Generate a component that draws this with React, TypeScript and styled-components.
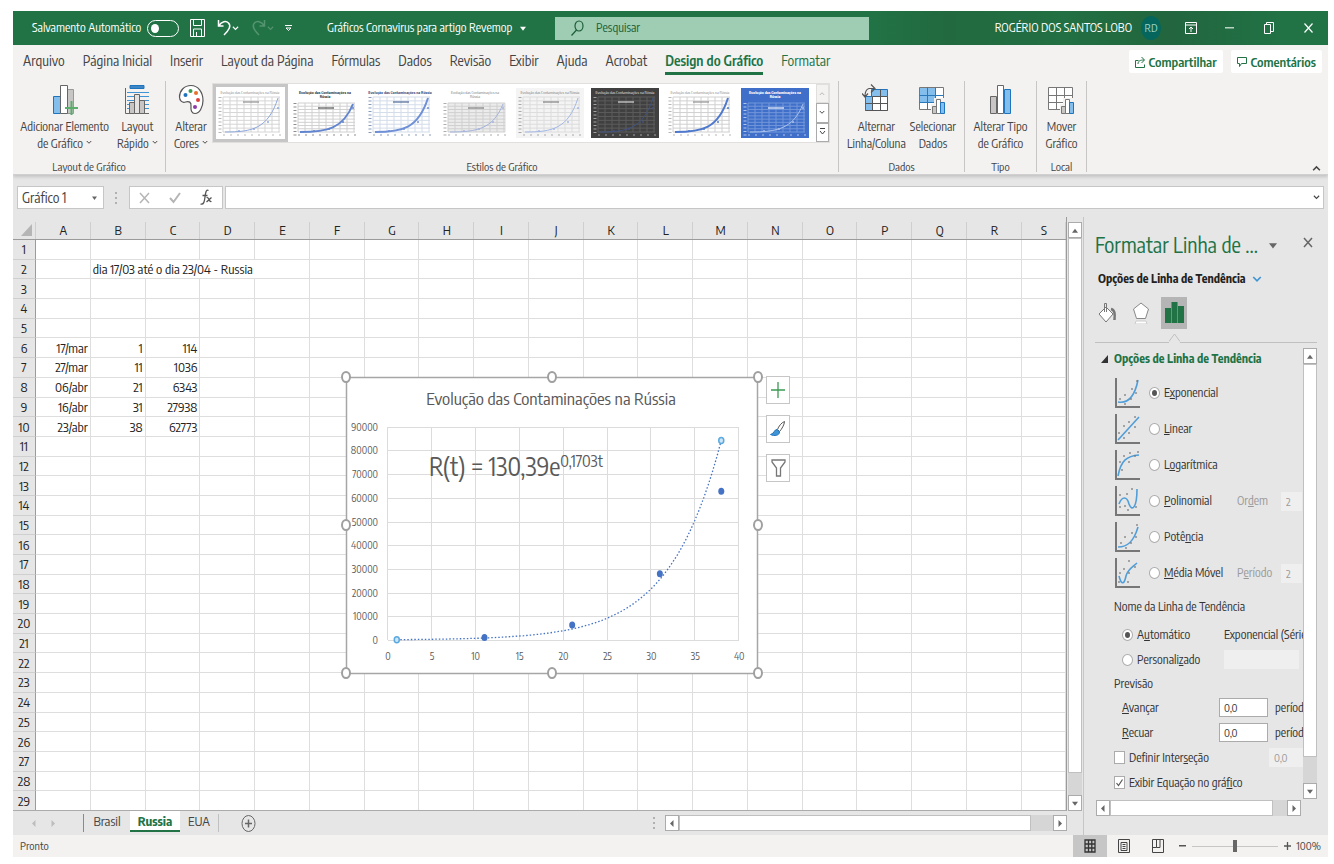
import React from 'react';
import styled, { createGlobalStyle } from 'styled-components';

const GREEN = '#217346';
const PANEL = '#e6e6e6';

const GlobalStyle = createGlobalStyle`
  * { box-sizing: border-box; }
  body {
    margin: 0;
    background: #fff;
    color: #444;
    font: 13px/16px "Encode Sans Condensed", "Roboto Condensed", Lato, sans-serif;
  }
  button, input, select { font: inherit; color: inherit; margin: 0; }
  button { border: 0; padding: 0; background: none; white-space: nowrap; }
  svg { display: block; flex: none; }
`;

const Window = styled.div`
  margin: 11px 6px 7px 13px;
  display: flex;
  flex-direction: column;
`;

/* ---------- title bar ---------- */
const TitleBar = styled.header`
  height: 34px;
  background: linear-gradient(90deg, ${GREEN} 65%, #22693f 71%, #227043 80%, #22653e 88%, #217346 97%);
  color: #fff;
  font-size: 12px;
  display: flex;
  align-items: center;
`;
const QuickAccess = styled.div`
  width: 314px;
  padding-left: 19px;
  display: flex;
  align-items: center;
  gap: 9px;
  white-space: nowrap;
`;
const AutoSave = styled.label`
  display: flex;
  align-items: center;
  width: 147px;
  justify-content: space-between;
`;
const Toggle = styled.input`
  appearance: none;
  width: 32px;
  height: 17px;
  border: 1px solid #fff;
  border-radius: 9px;
  display: flex;
  align-items: center;
  padding-left: 3px;
  &::before { content: ''; width: 8px; height: 9px; border-radius: 50%; background: #fff; }
`;
const IconButton = styled.button<{ $w?: number }>`
  display: flex;
  align-items: center;
  justify-content: center;
  width: ${p => (p.$w ? `${p.$w}px` : 'auto')};
`;
const FileName = styled.button`
  display: flex;
  align-items: center;
  gap: 8px;
  width: 228px;
`;
const SearchBox = styled.label`
  display: flex;
  align-items: center;
  gap: 12px;
  width: 314px;
  height: 23px;
  padding-left: 16px;
  background: #9fcdb3;
  color: #1b5e39;
  input { border: 0; background: none; width: 200px; padding: 0; outline: 0; }
  input::placeholder { color: #1b5e39; opacity: 1; }
`;
const Account = styled.div`
  margin-left: auto;
  display: flex;
  align-items: center;
  gap: 9px;
`;
const Avatar = styled.span`
  width: 20px;
  height: 24px;
  border-radius: 50%;
  background: #04665c;
  color: #9fd8c8;
  font-size: 11px;
  line-height: 24px;
  text-align: center;
`;
const WindowControls = styled.div`
  display: flex;
  margin-left: 10px;
`;

/* ---------- ribbon ---------- */
const Ribbon = styled.div`
  height: 130px;
  background: #f3f2f1;
  border-bottom: 1px solid #d0d0d0;
  box-shadow: 0 2px 3px #c4c4c4;
  clip-path: inset(0 0 -6px 0);
  position: relative;
`;
const TabRow = styled.nav`
  height: 33px;
  padding: 0 6px 0 10px;
  display: flex;
  align-items: center;
  gap: 18px;
  font-size: 14px;
`;
const Tab = styled.button<{ $tone?: 'active' | 'context' }>`
  height: 26px;
  padding-top: 2px;
  color: ${p => (p.$tone ? GREEN : '#444')};
  font-weight: ${p => (p.$tone === 'active' ? 600 : 400)};
  border-bottom: 3px solid ${p => (p.$tone === 'active' ? GREEN : 'transparent')};
`;
const TabActions = styled.div`
  margin-left: auto;
  display: flex;
  gap: 8px;
`;
const ActionButton = styled.button`
  height: 23px;
  padding: 0 6px;
  display: flex;
  align-items: center;
  gap: 4px;
  background: #fff;
  border-radius: 2px;
  color: ${GREEN};
  font-size: 13px;
  font-weight: 600;
`;
const Groups = styled.div`
  display: flex;
  padding-top: 3px;
`;
const Group = styled.section<{ $w: number }>`
  width: ${p => p.$w}px;
  height: 91px;
  border-right: 1px solid #c8c6c4;
  display: flex;
  flex-direction: column;
  justify-content: space-between;
`;
const GroupBody = styled.div<{ $gap?: number }>`
  display: flex;
  justify-content: center;
  gap: ${p => p.$gap ?? 8}px;
`;
const GroupName = styled.span`
  font-size: 11px;
  line-height: 13px;
  text-align: center;
  height: 12px;
`;
const Command = styled.button`
  display: flex;
  flex-direction: column;
  align-items: center;
  padding-top: 3px;
  font-size: 12px;
  svg { margin-bottom: 3px; }
`;
const Caption = styled.span`
  display: flex;
  align-items: center;
  gap: 3px;
  height: 17px;
`;
const Gallery = styled.div`
  display: flex;
  height: 60px;
  margin-top: 2px;
  background: #fff;
  border: 1px solid #e1dfdd;
`;
const Thumb = styled.button<{ $on?: boolean }>`
  width: 75px;
  height: 58px;
  display: flex;
  align-items: center;
  justify-content: center;
  border: 3px solid ${p => (p.$on ? '#c6c6c6' : 'transparent')};
`;
const GalleryNav = styled.div`
  display: flex;
  flex-direction: column;
  width: 13px;
  margin-left: 3px;
`;
const NavStep = styled.button`
  flex: 1;
  border: 1px solid #ababab;
  display: flex;
  align-items: center;
  justify-content: center;
  &:disabled { border-color: #e1dfdd; background: #f3f2f1; }
`;
const Collapse = styled.button`
  position: absolute;
  right: 7px;
  bottom: 3px;
`;

/* ---------- formula bar ---------- */
const FormulaBar = styled.div`
  height: 42px;
  padding: 11px 4px 8px;
  background: ${PANEL};
  display: flex;
  align-items: stretch;
`;
const NameBox = styled.div`
  width: 87px;
  background: #fff;
  border: 1px solid #c6c6c6;
  display: flex;
  align-items: center;
  padding: 0 5px 0 4px;
  input { width: 70px; border: 0; padding: 0; background: none; outline: 0; font-size: 14px; }
`;
const Grip = styled.span`
  width: 25px;
  display: flex;
  align-items: center;
  justify-content: center;
`;
const FormulaTools = styled.div`
  width: 94px;
  margin-right: 2px;
  background: #fff;
  border: 1px solid #c6c6c6;
  display: flex;
  align-items: center;
  justify-content: space-around;
`;
const FormulaField = styled.div`
  flex: 1;
  display: flex;
  align-items: center;
  padding-right: 3px;
  background: #fff;
  border: 1px solid #c6c6c6;
  input { flex: 1; border: 0; background: none; outline: 0; }
`;

/* ---------- work area ---------- */
const Main = styled.main`
  display: flex;
  background: ${PANEL};
  height: 618px;
`;
const Workbook = styled.div`
  flex: 1;
  min-width: 0;
  display: flex;
  flex-direction: column;
`;
const SheetRow = styled.div`
  display: flex;
  height: 594px;
`;
const Sheet = styled.div`
  flex: 1;
  min-width: 0;
  position: relative;
  overflow: hidden;
  border-right: 1px solid #9b9b9b;
  border-bottom: 1px solid #ababab;
`;
const Grid = styled.table`
  width: 100%;
  height: 594px;
  table-layout: fixed;
  border-collapse: separate;
  border-spacing: 0;
  color: #222;
  th, td { padding: 0; font-weight: 400; overflow: hidden; white-space: nowrap; line-height: 14px; }
`;
const ColHead = styled.th`
  height: 23px;
  padding-top: 4px !important;
  background: linear-gradient(#e6e6e6 5px, #cfcfcf 5px) right / 1px 100% no-repeat ${PANEL};
  border-bottom: 1px solid #9b9b9b;
  font-size: 13px;
`;
const RowHead = styled.th`
  background: ${PANEL};
  border-right: 1px solid #9b9b9b;
  border-bottom: 1px solid #cfcfcf;
  font-size: 13px;
`;
const Cell = styled.td<{ $align?: 'left' | 'right' }>`
  background: #fff;
  border-right: 1px solid #dedede;
  border-bottom: 1px solid #dedede;
  padding: ${p => (p.$align === 'left' ? '0 0 0 2px' : '0 2px 0 0')} !important;
  text-align: ${p => p.$align || 'right'};
  font-size: 13px;
`;
const ChartObject = styled.figure`
  position: absolute;
  left: 327px;
  top: 154px;
  margin: 0;
  text { fill: #595959; }
`;
const ChartTools = styled.div`
  position: absolute;
  left: 753px;
  top: 159px;
  display: flex;
  flex-direction: column;
  gap: 11px;
`;
const ChartTool = styled.button`
  width: 24px;
  height: 28px;
  background: #fff;
  border: 1px solid #c6c6c6;
  display: flex;
  align-items: center;
  justify-content: center;
`;

/* ---------- scroll bars ---------- */
const ScrollBar = styled.div<{ $dir: 'row' | 'column' }>`
  display: flex;
  flex-direction: ${p => p.$dir};
  background: #d6d6d6;
  ${p => (p.$dir === 'column' ? 'width: 14px;' : 'height: 16px;')}
`;
const ScrollStep = styled.button`
  width: 14px;
  height: 16px;
  background: #fff;
  border: 1px solid #ababab;
  display: flex;
  align-items: center;
  justify-content: center;
  flex: none;
`;
const ScrollThumb = styled.div`
  flex: 1;
  background: #fff;
  border: 1px solid #c0c0c0;
`;
const ScrollGap = styled.div<{ $size: number }>`
  flex: 0 0 ${p => p.$size}px;
`;
const SheetScroll = styled(ScrollBar)`
  margin: 5px 1px 0 1px;
`;
const BookFooter = styled.div`
  height: 24px;
  display: flex;
  align-items: center;
  padding-right: 16px;
`;
const SheetNav = styled.div`
  width: 71px;
  height: 18px;
  padding-left: 18px;
  display: flex;
  align-items: center;
  gap: 13px;
  border-right: 1px solid #8a8a8a;
`;
const SheetTab = styled.button<{ $on?: boolean; $w: number }>`
  width: ${p => p.$w}px;
  height: 21px;
  align-self: flex-start;
  background: ${p => (p.$on ? '#fff' : 'none')};
  color: ${p => (p.$on ? GREEN : '#444')};
  font-weight: ${p => (p.$on ? 700 : 400)};
  border-bottom: 2px solid ${p => (p.$on ? GREEN : 'transparent')};
`;
const AddSheet = styled.button`
  height: 18px;
  padding-left: 22px;
  border-left: 1px solid #c0c0c0;
`;
const FooterScroll = styled.div`
  margin-left: auto;
  width: 414px;
  display: flex;
  gap: 9px;
  align-items: center;
  ${ScrollBar} { flex: 1; }
`;

/* ---------- format pane ---------- */
const Pane = styled.aside`
  width: 245px;
  border-left: 1px solid #c6c6c6;
  padding: 14px 11px 0 11px;
  font-size: 12px;
  color: #333;
`;
const PaneHeader = styled.div`
  display: flex;
  align-items: center;
  height: 28px;
  h2 { margin: 0; font-size: 21px; line-height: 28px; font-weight: 400; color: ${GREEN}; width: 174px; white-space: nowrap; }
`;
const PaneClose = styled.button`
  margin-left: auto;
  padding: 0 4px 6px 0;
`;
const PaneSubject = styled.button`
  display: flex;
  align-items: center;
  gap: 6px;
  height: 38px;
  padding: 2px 0 0 3px;
  font-weight: 700;
  color: #222;
`;
const PaneIcons = styled.div`
  height: 45px;
  display: flex;
  align-items: flex-start;
  gap: 7px;
`;
const PaneIcon = styled.button<{ $on?: boolean }>`
  width: 26px;
  height: 32px;
  display: flex;
  align-items: center;
  justify-content: center;
  background: ${p => (p.$on ? '#b5b5b5' : 'none')};
`;
const Divider = styled.div`
  margin-top: -9px;
  height: 15px;
  display: flex;
  align-items: flex-start;
  &::before { content: ''; width: 74px; height: 9px; border-bottom: 1px solid #c0c0c0; }
  &::after { content: ''; flex: 1; height: 9px; border-bottom: 1px solid #c0c0c0; }
`;
const PaneBody = styled.div`
  display: flex;
  height: 451px;
`;
const Options = styled.form`
  flex: 1;
  min-width: 0;
  overflow: hidden;
  white-space: nowrap;
`;
const SectionToggle = styled.button`
  display: flex;
  align-items: center;
  gap: 6px;
  height: 27px;
  padding: 0 0 6px 6px;
  font-weight: 700;
  color: ${GREEN};
`;
const TrendRow = styled.div`
  height: 36px;
  padding-left: 20px;
  display: flex;
  align-items: center;
  gap: 9px;
`;
const TrendChoice = styled.label`
  display: flex;
  align-items: center;
  gap: 4px;
  width: 79px;
`;
const TrendParam = styled.label`
  display: flex;
  align-items: center;
  justify-content: space-between;
  width: 65px;
  flex: none;
  color: #9a9a9a;
`;
const Radio = styled.input`
  appearance: none;
  flex: none;
  width: 11px;
  height: 12px;
  border: 1px solid #ababab;
  border-radius: 50%;
  background: #fff;
  display: flex;
  align-items: center;
  justify-content: center;
  &:checked::before { content: ''; width: 5px; height: 6px; border-radius: 50%; background: #555; }
`;
const Check = styled.input`
  appearance: none;
  flex: none;
  width: 11px;
  height: 13px;
  border: 1px solid #ababab;
  background: #fff;
  &:checked {
    background: #fff url("data:image/svg+xml,%3Csvg xmlns='http://www.w3.org/2000/svg' viewBox='0 0 9 11'%3E%3Cpath d='M1.5 6l2 2.5L7.5 2.500' fill='none' stroke='%23555' stroke-width='1.200'/%3E%3C/svg%3E") center no-repeat;
  }
`;
const Label = styled.p<{ $h: number }>`
  margin: 0;
  padding-left: 19px;
  height: ${p => p.$h}px;
  line-height: ${p => p.$h}px;
`;
const FieldRow = styled.div<{ $indent: number }>`
  height: 25px;
  padding-left: ${p => p.$indent}px;
  display: flex;
  align-items: center;
  gap: 7px;
`;
const FieldName = styled.label<{ $w: number }>`
  display: flex;
  align-items: center;
  gap: 4px;
  width: ${p => p.$w}px;
  flex: none;
`;
const TextBox = styled.input<{ $w: number }>`
  flex: none;
  width: ${p => p.$w}px;
  height: 19px;
  padding: 0 4px;
  border: 1px solid #ababab;
  background: #fff;
  font-size: 11px;
  &:disabled { border-color: #efefef; background: #efefef; color: #9a9a9a; }
`;
const PaneScrollRow = styled.div`
  padding: 1px 16px 0 1px;
`;

/* ---------- status bar ---------- */
const StatusBar = styled.footer`
  height: 22px;
  background: #f3f2f1;
  display: flex;
  align-items: center;
  padding: 0 7px;
  font-size: 11px;
`;
const Views = styled.div`
  margin-left: auto;
  display: flex;
`;
const View = styled.button<{ $on?: boolean }>`
  width: 34px;
  height: 22px;
  display: flex;
  align-items: center;
  justify-content: center;
  background: ${p => (p.$on ? '#c6c6c6' : 'none')};
`;
const Zoom = styled.div`
  display: flex;
  align-items: center;
  gap: 6px;
  margin-left: 4px;
`;
const ZoomSlider = styled.input`
  appearance: none;
  width: 86px;
  height: 12px;
  background: linear-gradient(#c6c6c6, #c6c6c6) center / 100% 1px no-repeat;
  &::-webkit-slider-thumb { appearance: none; width: 4px; height: 12px; background: #666; }
`;

/* ---------- drawings ---------- */
const Chevron = ({ w = 7, color = '#444', up = false }: { w?: number; color?: string; up?: boolean }) => (
  <svg width={w} height={Math.max(5, w - 3)} viewBox="0 0 8 5" fill="none" stroke={color} strokeWidth="1.300">
    <path d={up ? 'M1 4.500l3-3 3 3' : 'M1 .5l3 3 3-3'} />
  </svg>
);
const Triangle = ({ d = 'down', color = '#666', s = 6 }: { d?: string; color?: string; s?: number }) => {
  const paths: Record<string, string> = {
    down: 'M0 1.500h6L3 5z', up: 'M0 5h6L3 1.500z', left: 'M4.500 0v6L1 3z', right: 'M1.500 0v6L5 3z',
  };
  return <svg width={s} height={s + 1} viewBox="0 0 6 6" preserveAspectRatio="none" fill={color}><path d={paths[d]} /></svg>;
};
const Dots = () => (
  <svg width="3" height="12" fill="#b0b0b0"><path d="M0 0h2v2H0zM0 5h2v2H0zM0 10h2v2H0z" /></svg>
);

const barsIcon = (
  <svg width="22" height="31" fill="#c8c6c4" stroke="#666">
    <path d="M.5 12.500h6v17h-6z" /><path fill="#fff" d="M7.500 1.500h6v28h-6z" /><path fill="#83beec" stroke="#1e74bd" d="M14.500 5.500h6v24h-6z" />
  </svg>
);
const addElementIcon = (
  <svg width="26" height="31" stroke="#666">
    <path fill="#83beec" stroke="#1e74bd" d="M1.500 12.500h7v17h-7z" /><path fill="#c8c6c4" stroke="#999" d="M15.500 5.500h6v24h-6z" />
    <path fill="#fff" d="M8.500 1.500h7v28h-7z" /><path d="M19.500 17v14M13 24h13" stroke="#5aae6c" strokeWidth="2" />
  </svg>
);
const quickLayoutIcon = (
  <svg width="26" height="31" fill="none" stroke="#666">
    <path fill="#3f86c6" stroke="#1e74bd" d="M6 1.500h14v3H6z" /><path d="M3 8.500h22M3 12.500h22M3 16.500h22M3 20.500h22M3 24.500h22" stroke="#3f94d6" />
    <path d="M1.500 4v25.500H25" /><path fill="#c8c6c4" d="M5.500 18.500h5v11h-5zM15.500 16.500h5v13h-5z" /><path fill="#e4e2e0" d="M10.500 10.500h5v19h-5z" />
  </svg>
);
const paletteIcon = (
  <svg width="26" height="31" viewBox="0 0 26 31" stroke="none">
    <path d="M13 1.500C6 1.500 1.500 7 1.500 13c0 4 3 6 6 5 3.500-1 6 0 5.500 4-.4 4 .5 7.500 4 7.500 4.500 0 8-6.500 8-13C25 8 20 1.500 13 1.500z" fill="#fff" stroke="#555" strokeWidth="1.200" />
    <circle cx="7.500" cy="11" r="2" fill="#1e74bd" /><circle cx="12.500" cy="7" r="2" fill="#3a9b52" /><circle cx="18" cy="9" r="2" fill="#e8702a" />
    <circle cx="20" cy="16" r="2" fill="#e03c3c" /><circle cx="17" cy="23" r="2" fill="#8e3ba6" />
  </svg>
);
const switchIcon = (
  <svg width="28" height="31" fill="none" stroke="#555">
    <path fill="#83beec" stroke="#1e74bd" d="M9.500 5.500h16v7h-16zM3.500 12.500h7v14h-7z" /><path fill="#fff" d="M10.500 12.500h15v14h-15z" />
    <path d="M3.500 19.500h22M3.500 26.500h22M18.500 5.500v21M10.500 12.500v14" />
    <path strokeWidth="1.200" d="M12 4.500H7q-4 1-4 8M9 .5l4 4-4 4M0 9.500l3 3.500 3-3.500" />
  </svg>
);
const tableBars = (blue: boolean) => (
  <svg width="27" height="31" fill="none" stroke="#777">
    <path fill="#fff" d="M.5 3.500h24v22H.5z" />{blue && <path fill="#83beec" stroke="none" d="M1 4h16v14H1z" />}
    <path d="M.5 11.500h24M.5 18.500h18M8.500 3.500v22M16.500 3.500v15" stroke={blue ? '#2b79b9' : '#777'} />
    <path fill="#f3f2f1" stroke="none" d="M12 20h3v-6h12v17H12z" />
    <path fill="#c8c6c4" d="M13.500 22.500h4v7h-4z" /><path fill="#fff" d="M17.500 15.500h4v14h-4z" /><path fill="#83beec" stroke="#1e74bd" d="M21.500 18.500h4v11h-4z" />
  </svg>
);

type ThumbStyle = { bg: string; fg: string; line: string; grid: string; plot?: string; bold?: boolean; two?: boolean; w: number };
const thumbs: ThumbStyle[] = [
  { bg: '#fff', fg: '#888', line: '#8fa8dc', grid: '#d5d5d5', w: 1 },
  { bg: '#fff', fg: '#444', line: '#6285cf', grid: '#d0d0d0', bold: true, two: true, w: 2 },
  { bg: '#fff', fg: '#3b5a8c', line: '#6f90d6', grid: '#d3dcea', bold: true, w: 2 },
  { bg: '#fff', fg: '#777', line: '#a4b4dd', grid: '#cfcfcf', plot: '#ececec', two: true, w: 1 },
  { bg: '#f4f4f4', fg: '#777', line: '#a4b9e6', grid: '#dcdcdc', w: 1 },
  { bg: '#404040', fg: '#e4e4e4', line: '#40527f', grid: '#5c5c5c', w: 1 },
  { bg: '#fff', fg: '#888', line: '#4f79cd', grid: '#d0d0d0', w: 2 },
  { bg: '#3f6fc9', fg: '#fff', line: '#a9c1ee', grid: '#7397da', bold: true, two: true, w: 1 },
];
const ThumbDrawing = ({ t }: { t: ThumbStyle }) => {
  const top = t.two ? 15 : 9;
  const h = 44 - top;
  return (
    <svg width="68" height="50" viewBox="0 0 68 50">
      <path d="M0 0h68v50H0z" fill={t.bg} />
      {t.plot && <path d={`M7 ${top}h58v${h}H7z`} fill={t.plot} />}
      <g stroke={t.grid} strokeWidth="1">
        {[...Array(9)].map((_, i) => <path key={i} d={`M${7 + i * 7} ${top}v${h}`} />)}
        {[...Array(10)].map((_, i) => <path key={`h${i}`} d={`M7 ${44 - (i * h) / 9}h57`} />)}
      </g>
      <path d={`M4 ${top}v36`} stroke={t.fg} strokeWidth="3" strokeDasharray="1 2.500" opacity=".6" />
      <path d="M7 47h58" stroke={t.fg} strokeWidth="1" strokeDasharray="2 5" opacity=".6" />
      <path d={`M9 44C36 44 52 41 62 ${top + 1}`} fill="none" stroke={t.line} strokeWidth={t.w} />
      <g fill={t.line}><circle cx="23" cy="43" r="1" /><circle cx="38" cy="41" r="1" /><circle cx="52" cy="34" r="1" /><circle cx="62" cy="20" r="1" /></g>
      <path d={`M27 ${top + 5}h16`} stroke={t.fg} strokeWidth="2" opacity=".55" />
      <g fill={t.fg} fontSize="4" textAnchor="middle" fontWeight={t.bold ? 700 : 400}>
        <text x="34" y="6">{t.two ? 'Evolução das Contaminações na' : 'Evolução das Contaminações na Rússia'}</text>
        {t.two && <text x="34" y="10">Rússia</text>}
      </g>
    </svg>
  );
};

const trendPaths: Record<string, string> = {
  exp: 'M3 24c11 2 17-7 20-22',
  lin: 'M3 26L24 3',
  log: 'M3 26C6 10 12 6 24 5',
  pol: 'M4 18c3-8 8-8 10 0 3 8 8 4 8-15',
  pot: 'M3 25c10 0 16-6 20-20',
  avg: 'M4 18c2 8 5 10 7 0 2-7 7-9 11-13',
};
const trendDots: Record<string, string> = {
  exp: 'M5 21h0M10 17h0M10 26h0M16 21h0M17 11h0M21 15h0M22 3h0',
  lin: 'M4 19h0M9 24h0M9 12h0M14 19h0M14 8h0M20 13h0M20 3h0',
  log: 'M5 12h0M7 20h0M9 6h0M14 12h0M15 3h0M23 2h0M20 6h0',
  pol: 'M5 9h0M5 21h0M12 8h0M13 24h0M17 3h0M21 21h0M10 20h0',
  pot: 'M6 21h0M10 15h0M11 26h0M16 21h0M17 11h0M21 15h0M22 3h0',
  avg: 'M5 15h0M4 24h0M9 11h0M13 24h0M14 3h0M20 9h0M14 15h0',
};
const TrendIcon = ({ kind }: { kind: string }) => (
  <svg width="25" height="30" fill="none">
    <path d="M1 0v29h24" stroke="#777" strokeWidth="2" />
    <path d={trendPaths[kind]} stroke="#4f9dd9" strokeWidth="1.600" />
    <path d={trendDots[kind]} stroke="#777" strokeWidth="1.600" strokeLinecap="square" />
  </svg>
);

/* ---------- chart ---------- */
const px = (x: number) => 42 + x * 8.77;
const py = (y: number) => 269 - (y / 10000) * 23.7;
const trend = [...Array(75)].map((_, i) => 1 + i / 2).map((t, i) => `${i ? 'L' : 'M'}${px(t).toFixed(1)} ${py(130.39 * Math.exp(0.1703 * t)).toFixed(1)}`).join('');
const points = [[11, 1036], [21, 6343], [31, 27938], [38, 62773]];

const Chart = () => (
  <svg width="424" height="308" viewBox="-6 0 424 308" role="img" aria-label="Evolução das Contaminações na Rússia">
    <path d="M.5 6.500h411v296H.5z" fill="#fff" stroke="#a6a6a6" strokeWidth="1.500" />
    <g stroke="#dcdcdc">
      {[...Array(10)].map((_, i) => <path key={i} d={`M42 ${Math.round(269 - i * 23.7) + 0.5}h351`} />)}
      {[...Array(9)].map((_, i) => <path key={`v${i}`} d={`M${Math.round(42 + i * 43.9) - 0.5} 56v213`} />)}
    </g>
    <text x="205" y="34" fontSize="17" textAnchor="middle">Evolução das Contaminações na Rússia</text>
    <g fontSize="10" textAnchor="end">
      {[...Array(10)].map((_, i) => <text key={i} x="32" y={273 - i * 23.7}>{i * 10000}</text>)}
    </g>
    <g fontSize="10" textAnchor="middle">
      {[...Array(9)].map((_, i) => <text key={i} x={42 + i * 43.9} y="289">{i * 5}</text>)}
    </g>
    <path d={trend} fill="none" stroke="#4472c4" strokeWidth="1.300" strokeDasharray="1.500 2" />
    {points.map(([x, y]) => <ellipse key={y} cx={px(x)} cy={py(y)} rx="3" ry="3.500" fill="#4472c4" />)}
    {[[1, 114], [38, 84200]].map(([x, y]) => <ellipse key={y} cx={px(x)} cy={py(y)} rx="2.500" ry="3" fill="#cde6f7" stroke="#5aa9e0" strokeWidth="1.500" />)}
    <text x="83" y="105" fontSize="25">R(t) = 130,39e<tspan dy="-9" fontSize="16">0,1703t</tspan></text>
    {[0, 206, 412].flatMap(x => [6, 154, 302].map(y => (x === 206 && y === 154 ? null :
      <ellipse key={`${x}-${y}`} cx={x} cy={y} rx="4" ry="5" fill="#fff" stroke="#a0a0a0" strokeWidth="2" />)))}
  </svg>
);

const columns = 'ABCDEFGHIJKLMNOPQRS'.split('');
const data: Record<number, string[]> = {
  6: ['17/mar', '1', '114'],
  7: ['27/mar', '11', '1036'],
  8: ['06/abr', '21', '6343'],
  9: ['16/abr', '31', '27938'],
  10: ['23/abr', '38', '62773'],
};

const tabs = ['Arquivo', 'Página Inicial', 'Inserir', 'Layout da Página', 'Fórmulas', 'Dados', 'Revisão', 'Exibir', 'Ajuda', 'Acrobat'];

const options: { kind: string; label: React.ReactNode; param?: React.ReactNode }[] = [
  { kind: 'exp', label: <>E<u>x</u>ponencial</> },
  { kind: 'lin', label: <><u>L</u>inear</> },
  { kind: 'log', label: <>L<u>o</u>garítmica</> },
  { kind: 'pol', label: <><u>P</u>olinomial</>, param: <>Or<u>d</u>em</> },
  { kind: 'pot', label: <>Potê<u>n</u>cia</> },
  { kind: 'avg', label: <><u>M</u>édia Móvel</>, param: <>P<u>e</u>ríodo</> },
];

const ScrollParts = ({ dir, gap = 22 }: { dir: 'row' | 'column'; gap?: number }) => (
  <>
    <ScrollStep type="button" aria-label="Voltar"><Triangle d={dir === 'row' ? 'left' : 'up'} /></ScrollStep>
    <ScrollThumb />
    <ScrollGap $size={gap} />
    <ScrollStep type="button" aria-label="Avançar"><Triangle d={dir === 'row' ? 'right' : 'down'} /></ScrollStep>
  </>
);

export default function App() {
  return (
    <Window>
      <GlobalStyle />
      <TitleBar>
        <QuickAccess>
          <AutoSave>Salvamento Automático <Toggle type="checkbox" role="switch" /></AutoSave>
          <IconButton aria-label="Salvar" $w={18}>
            <svg width="15" height="18" fill="none" stroke="#fff"><path d="M.5.5h14v17h-14zM3.500.5v6h8v-6M3.500 17v-7h8v7M6.500 17v-4" /></svg>
          </IconButton>
          <IconButton aria-label="Desfazer" $w={26}>
            <svg width="15" height="18" fill="none" stroke="#fff" strokeWidth="1.500"><path d="M1.500 1v6h5M1.500 7C5 2 9 1.500 11.500 4c3 3 .5 7-4.500 12" /></svg>
            <Chevron color="#fff" />
          </IconButton>
          <IconButton aria-label="Refazer" disabled $w={26}>
            <svg width="15" height="18" fill="none" stroke="#54946f" strokeWidth="1.500"><path d="M12.500 1v6h-5M12.500 7C9 2 5 1.500 2.500 4c-3 3-.5 7 4.500 12" /></svg>
            <Chevron color="#54946f" />
          </IconButton>
          <IconButton aria-label="Personalizar barra">
            <svg width="7" height="7" fill="none" stroke="#fff"><path d="M0 .5h7M1 3l2.500 2.500L6 3z" /></svg>
          </IconButton>
        </QuickAccess>
        <FileName>Gráficos Cornavirus para artigo Revemop <Triangle color="#fff" s={6} /></FileName>
        <SearchBox>
          <svg width="13" height="16" fill="none" stroke="#1b5e39" strokeWidth="1.200"><ellipse cx="8" cy="6" rx="4" ry="5" /><path d="M5.500 10L.5 15.500" /></svg>
          <input placeholder="Pesquisar" aria-label="Pesquisar" />
        </SearchBox>
        <Account>
          ROGÉRIO DOS SANTOS LOBO
          <Avatar>RD</Avatar>
        </Account>
        <WindowControls>
          <IconButton $w={39} aria-label="Opções da faixa">
            <svg width="12" height="12" fill="none" stroke="#fff"><path d="M.5.5h11v11H.5zM.5 3h11M6 10V5M4 7l2-2 2 2" /></svg>
          </IconButton>
          <IconButton $w={39} aria-label="Minimizar"><svg width="9" height="2"><path d="M0 0h9v1.500H0z" fill="#b8d4c4" /></svg></IconButton>
          <IconButton $w={39} aria-label="Restaurar">
            <svg width="10" height="12" fill="none" stroke="#fff"><path d="M.5 2.500h6v9h-6zM2.500 2.500v-2h7v9h-3" /></svg>
          </IconButton>
          <IconButton $w={40} aria-label="Fechar"><svg width="9" height="10" stroke="#fff" strokeWidth="1.200"><path d="M.5.5l8 9M8.500.5l-8 9" /></svg></IconButton>
        </WindowControls>
      </TitleBar>

      <Ribbon>
        <TabRow>
          {tabs.map(t => <Tab key={t}>{t}</Tab>)}
          <Tab $tone="active">Design do Gráfico</Tab>
          <Tab $tone="context">Formatar</Tab>
          <TabActions>
            <ActionButton>
              <svg width="10" height="13" fill="none" stroke={GREEN}><path d="M3.500 5.500h-3v7h9v-3M3 9c0-3 2-4 6-4M6.500 2L9.500 5l-3 3" /></svg>
              Compartilhar
            </ActionButton>
            <ActionButton>
              <svg width="10" height="12" fill="none" stroke={GREEN}><path d="M.5 1.500h9v6h-5l-2 3v-3h-2z" /></svg>
              Comentários
            </ActionButton>
          </TabActions>
        </TabRow>
        <Groups>
          <Group $w={153}>
            <GroupBody>
              <Command>{addElementIcon}<Caption>Adicionar Elemento</Caption><Caption>de Gráfico <Chevron w={6} /></Caption></Command>
              <Command>{quickLayoutIcon}<Caption>Layout</Caption><Caption>Rápido <Chevron w={6} /></Caption></Command>
            </GroupBody>
            <GroupName>Layout de Gráfico</GroupName>
          </Group>
          <Group $w={673}>
            <GroupBody $gap={4}>
              <Command>{paletteIcon}<Caption>Alterar</Caption><Caption>Cores <Chevron w={6} /></Caption></Command>
              <Gallery>
                {thumbs.map((t, i) => <Thumb key={i} $on={i === 0} aria-label={`Estilo ${i + 1}`}><ThumbDrawing t={t} /></Thumb>)}
                <GalleryNav>
                  <NavStep disabled aria-label="Linha anterior"><Chevron w={6} up color="#b5b5b5" /></NavStep>
                  <NavStep aria-label="Próxima linha"><Chevron w={6} /></NavStep>
                  <NavStep aria-label="Mais estilos">
                    <svg width="7" height="8" fill="none" stroke="#444"><path d="M1 .5h5M1 3l2.500 3L6 3" /></svg>
                  </NavStep>
                </GalleryNav>
              </Gallery>
            </GroupBody>
            <GroupName>Estilos de Gráfico</GroupName>
          </Group>
          <Group $w={126}>
            <GroupBody $gap={4}>
              <Command>{switchIcon}<Caption>Alternar</Caption><Caption>Linha/Coluna</Caption></Command>
              <Command>{tableBars(true)}<Caption>Selecionar</Caption><Caption>Dados</Caption></Command>
            </GroupBody>
            <GroupName>Dados</GroupName>
          </Group>
          <Group $w={72}>
            <GroupBody><Command>{barsIcon}<Caption>Alterar Tipo</Caption><Caption>de Gráfico</Caption></Command></GroupBody>
            <GroupName>Tipo</GroupName>
          </Group>
          <Group $w={50}>
            <GroupBody><Command>{tableBars(false)}<Caption>Mover</Caption><Caption>Gráfico</Caption></Command></GroupBody>
            <GroupName>Local</GroupName>
          </Group>
        </Groups>
        <Collapse aria-label="Recolher faixa"><Chevron w={9} up /></Collapse>
      </Ribbon>

      <FormulaBar>
        <NameBox><input defaultValue="Gráfico 1" aria-label="Caixa de nome" /><Triangle s={5} /></NameBox>
        <Grip><Dots /></Grip>
        <FormulaTools>
          <IconButton aria-label="Cancelar"><svg width="11" height="12" stroke="#b5b5b5" strokeWidth="1.500"><path d="M1 1l9 10M10 1L1 11" /></svg></IconButton>
          <IconButton aria-label="Inserir"><svg width="12" height="12" fill="none" stroke="#b5b5b5" strokeWidth="2"><path d="M1 6l3.500 4L11 1" /></svg></IconButton>
          <IconButton aria-label="Inserir função">
            <svg width="13" height="17" fill="none" stroke="#555" strokeWidth="1.300"><path d="M8.500 1.500C6 0 5.500 4 5 8s-1 8-4.500 7M2.500 6.500h5M6.500 8.500c3-1 2 5 5 4M11.500 8.500L6.500 13" /></svg>
          </IconButton>
        </FormulaTools>
        <FormulaField><input aria-label="Barra de fórmulas" /><Chevron /></FormulaField>
      </FormulaBar>

      <Main>
        <Workbook>
          <SheetRow>
            <Sheet>
              <Grid>
                <colgroup>
                  <col style={{ width: 23 }} />
                  {columns.slice(0, -1).map(c => <col key={c} />)}
                  <col style={{ width: 44 }} />
                </colgroup>
                <thead>
                  <tr>
                    <ColHead scope="col" aria-label="Selecionar tudo">
                      <svg width="20" height="13"><path d="M19 0v12H8z" fill="#b5b5b5" /></svg>
                    </ColHead>
                    {columns.map(c => <ColHead key={c} scope="col">{c}</ColHead>)}
                  </tr>
                </thead>
                <tbody>
                  {[...Array(29)].map((_, r) => {
                    const row = r + 1;
                    return (
                      <tr key={row}>
                        <RowHead scope="row">{row}</RowHead>
                        {columns.map((c, i) => {
                          if (row === 2 && i > 1 && i < 5) return null;
                          if (row === 2 && i === 1) return <Cell key={c} colSpan={4} $align="left">dia 17/03 até o dia 23/04 - Russia</Cell>;
                          return <Cell key={c}>{data[row]?.[i]}</Cell>;
                        })}
                      </tr>
                    );
                  })}
                </tbody>
              </Grid>
              <ChartObject><Chart /></ChartObject>
              <ChartTools>
                <ChartTool aria-label="Elementos do gráfico"><svg width="14" height="16" stroke="#3a9b52" strokeWidth="1.300"><path d="M7 0v16M0 8h14" /></svg></ChartTool>
                <ChartTool aria-label="Estilos de gráfico">
                  <svg width="16" height="18"><path d="M14.500 1.500c-3 1-6 5-7 8l2 2c2-2 5-7 5-10z" fill="#fff" stroke="#555" /><path d="M7 9.500c-3 0-2.500 4-6.500 5 4 2 9 1 9-2.500z" fill="#3f94d6" stroke="#1e74bd" /></svg>
                </ChartTool>
                <ChartTool aria-label="Filtros de gráfico"><svg width="15" height="18" fill="none" stroke="#777" strokeWidth="1.300"><path d="M1 1h13v2L9.500 9v8h-4V9L1 3z" /></svg></ChartTool>
              </ChartTools>
            </Sheet>
            <SheetScroll $dir="column"><ScrollParts dir="column" /></SheetScroll>
          </SheetRow>
          <BookFooter>
            <SheetNav><Triangle d="left" color="#bdbdbd" /><Triangle d="right" color="#bdbdbd" /></SheetNav>
            <SheetTab $w={46}>Brasil</SheetTab>
            <SheetTab $w={50} $on>Russia</SheetTab>
            <SheetTab $w={38}>EUA</SheetTab>
            <AddSheet aria-label="Nova planilha">
              <svg width="15" height="17" fill="none" stroke="#666"><ellipse cx="7.500" cy="8.500" rx="6.500" ry="8" /><path d="M7.500 4.500v8M4 8.500h7" strokeWidth="1.500" /></svg>
            </AddSheet>
            <FooterScroll><Dots /><ScrollBar $dir="row"><ScrollParts dir="row" /></ScrollBar></FooterScroll>
          </BookFooter>
        </Workbook>

        <Pane>
          <PaneHeader>
            <h2>Formatar Linha de ...</h2>
            <Triangle s={8} />
            <PaneClose aria-label="Fechar painel"><svg width="10" height="11" stroke="#666" strokeWidth="1.500"><path d="M1 1l8 9M9 1l-8 9" /></svg></PaneClose>
          </PaneHeader>
          <PaneSubject>Opções de Linha de Tendência <Chevron w={10} color="#3f94d6" /></PaneSubject>
          <PaneIcons>
            <PaneIcon aria-label="Preenchimento e linha">
              <svg width="20" height="22" fill="none" stroke="#777"><path fill="#fff" d="M8 5l7 7-7 8-7-8z" /><path d="M6.500 10V1.500h2V10" /><path d="M13 7c4 1 4 5 3.500 11" strokeWidth="2.500" /></svg>
            </PaneIcon>
            <PaneIcon aria-label="Efeitos">
              <svg width="18" height="22" fill="#fff" stroke="#888"><path d="M9 1l7.500 6-3 9.500h-9L1.500 7z" /><path d="M4 19h10l1 3H3z" stroke="#ccc" /></svg>
            </PaneIcon>
            <PaneIcon $on aria-label="Opções de linha de tendência">
              <svg width="19" height="22" fill={GREEN}><path d="M0 6h6v15H0zM6.500 0h6v21h-6zM13 4h6v17h-6z" /></svg>
            </PaneIcon>
          </PaneIcons>
          <Divider><svg width="11" height="9" fill="none" stroke="#c0c0c0"><path d="M0 8.500L5.500 1 11 8.500" /></svg></Divider>
          <PaneBody>
            <Options>
              <SectionToggle type="button"><svg width="7" height="8"><path d="M7 0v8H0z" fill="#333" /></svg> Opções de Linha de Tendência</SectionToggle>
              {options.map(o => (
                <TrendRow key={o.kind}>
                  <TrendIcon kind={o.kind} />
                  <TrendChoice><Radio type="radio" name="trend" defaultChecked={o.kind === 'exp'} /><span>{o.label}</span></TrendChoice>
                  {o.param && <TrendParam><span>{o.param}</span><TextBox $w={21} disabled defaultValue="2" /></TrendParam>}
                </TrendRow>
              ))}
              <Label $h={31}>Nome da Linha de Tendência</Label>
              <FieldRow $indent={27}>
                <FieldName $w={95}><Radio type="radio" name="name" defaultChecked /><span>A<u>u</u>tomático</span></FieldName>
                Exponencial (Série 1)
              </FieldRow>
              <FieldRow $indent={27}>
                <FieldName $w={95}><Radio type="radio" name="name" /><span>Personali<u>z</u>ado</span></FieldName>
                <TextBox $w={75} disabled aria-label="Nome personalizado" />
              </FieldRow>
              <Label $h={23}>Previsão</Label>
              <FieldRow $indent={27}>
                <FieldName $w={90} htmlFor="fwd"><span><u>A</u>vançar</span></FieldName>
                <TextBox $w={49} id="fwd" defaultValue="0,0" />períodos
              </FieldRow>
              <FieldRow $indent={27}>
                <FieldName $w={90} htmlFor="back"><span><u>R</u>ecuar</span></FieldName>
                <TextBox $w={49} id="back" defaultValue="0,0" />períodos
              </FieldRow>
              <FieldRow $indent={19}>
                <FieldName $w={148}><Check type="checkbox" /><span>Definir Inter<u>s</u>eção</span></FieldName>
                <TextBox $w={49} disabled defaultValue="0,0" aria-label="Valor da interseção" />
              </FieldRow>
              <FieldRow $indent={19}>
                <FieldName $w={148}><Check type="checkbox" defaultChecked /><span>Exibir Equação no grá<u>f</u>ico</span></FieldName>
              </FieldRow>
            </Options>
            <ScrollBar $dir="column"><ScrollParts dir="column" gap={26} /></ScrollBar>
          </PaneBody>
          <PaneScrollRow><ScrollBar $dir="row"><ScrollParts dir="row" gap={14} /></ScrollBar></PaneScrollRow>
        </Pane>
      </Main>

      <StatusBar>
        Pronto
        <Views>
          <View $on aria-label="Normal"><svg width="12" height="14" fill="none" stroke="#333" strokeWidth="1.300"><path d="M1 1h10v12H1zM1 5h10M1 9h10M4.500 1v12M7.800 1v12" /></svg></View>
          <View aria-label="Layout da página"><svg width="12" height="14" fill="none" stroke="#444"><path d="M.5.5h11v13H.5zM3 3.500h6v8H3zM4.500 5.500h3M4.500 7.500h3M4.500 9.500h3" /></svg></View>
          <View aria-label="Quebra de página"><svg width="12" height="14" fill="none" stroke="#444"><path d="M.5.5h11v13H.5zM4.500.5v8h-4M8 .5v8H4.500" /></svg></View>
        </Views>
        <Zoom>
          <IconButton aria-label="Diminuir zoom"><svg width="7" height="2"><path d="M0 0h7v1.500H0z" fill="#555" /></svg></IconButton>
          <ZoomSlider type="range" aria-label="Zoom" />
          <IconButton aria-label="Aumentar zoom"><svg width="7" height="8" stroke="#555" strokeWidth="1.300"><path d="M3.500 0v8M0 4h7" /></svg></IconButton>
          <span>100%</span>
        </Zoom>
      </StatusBar>
    </Window>
  );
}
